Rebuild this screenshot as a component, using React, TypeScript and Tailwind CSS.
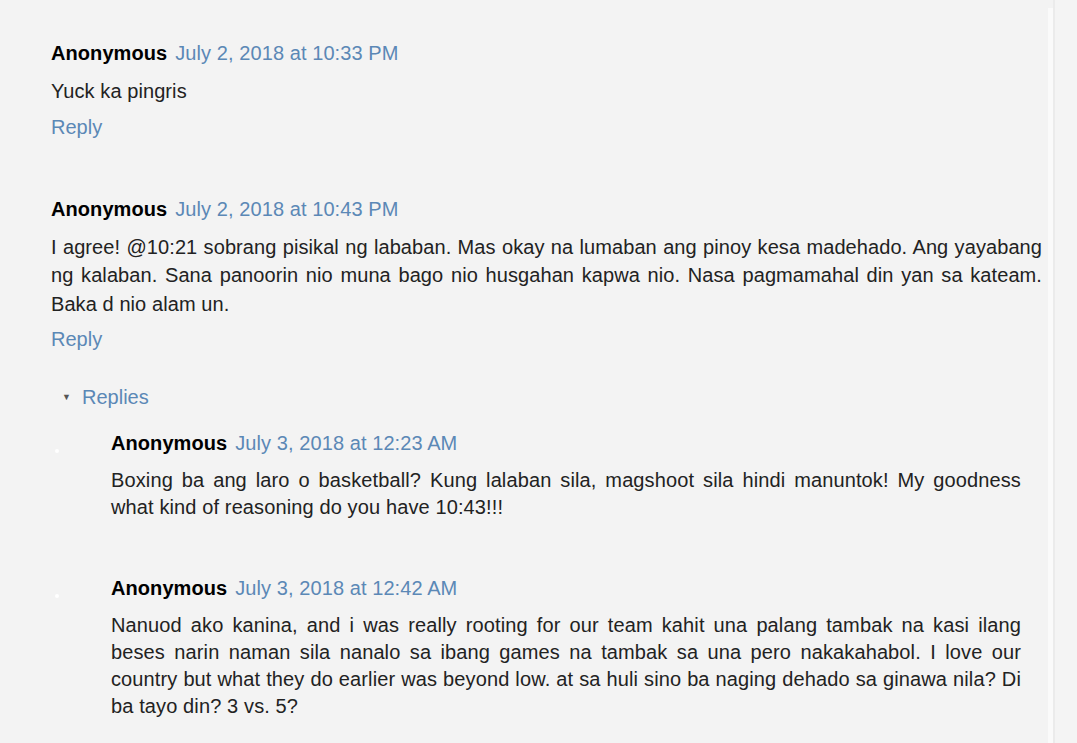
import React from 'react';

type Item = {
  date: string;
  body: string;
};

const font = { fontFamily: '"Liberation Sans", Arial, sans-serif' };

function Header({ date }: { date: string }) {
  return (
    <div className="leading-[28px] text-[20px] tracking-[0.08px]">
      <span className="font-bold text-black">Anonymous</span>
      <a className="ml-2 text-[#5b88b6]">{date}</a>
    </div>
  );
}

function Comment({ date, body }: Item) {
  return (
    <div>
      <Header date={date} />
      <p className="mt-[10px] text-[20px] leading-[28.5px] tracking-[0.08px] text-[#222] text-justify">{body}</p>
      <div className="mt-[7px] text-[20px] leading-[28px] text-[#5b88b6]">Reply</div>
    </div>
  );
}

function NestedComment({ date, body }: Item) {
  return (
    <div className="flex">
      <div className="w-[60px] shrink-0 pt-[20px] pl-[4px]">
        <div className="w-[4px] h-[4px] rounded-full bg-white" />
      </div>
      <div className="flex-1 pr-[21px]">
        <Header date={date} />
        <p className="mt-[10px] text-[20px] leading-[27.3px] tracking-[0.12px] text-[#222] text-justify">{body}</p>
      </div>
    </div>
  );
}

export default function App() {
  return (
    <div className="flex min-h-[743px] bg-[#f3f3f3]" style={font}>
      <div className="w-[1048px] shrink-0 pl-[51px] pr-[6px] pt-[39px]">
        <Comment date="July 2, 2018 at 10:33 PM" body="Yuck ka pingris" />
        <div className="mt-[54px]">
          <Comment
            date="July 2, 2018 at 10:43 PM"
            body="I agree! @10:21 sobrang pisikal ng lababan. Mas okay na lumaban ang pinoy kesa madehado. Ang yayabang ng kalaban. Sana panoorin nio muna bago nio husgahan kapwa nio. Nasa pagmamahal din yan sa kateam. Baka d nio alam un."
          />
        </div>
        <div className="mt-[30px] flex items-center leading-[28px] text-[20px]">
          <span className="ml-[11px] w-[20px] text-[9px] text-[#555]">▼</span>
          <span className="text-[#5b88b6]">Replies</span>
        </div>
        <div className="mt-[18px]">
          <NestedComment
            date="July 3, 2018 at 12:23 AM"
            body="Boxing ba ang laro o basketball? Kung lalaban sila, magshoot sila hindi manuntok! My goodness what kind of reasoning do you have 10:43!!!"
          />
          <div className="mt-[52px]">
            <NestedComment
              date="July 3, 2018 at 12:42 AM"
              body="Nanuod ako kanina, and i was really rooting for our team kahit una palang tambak na kasi ilang beses narin naman sila nanalo sa ibang games na tambak sa una pero nakakahabol. I love our country but what they do earlier was beyond low. at sa huli sino ba naging dehado sa ginawa nila? Di ba tayo din? 3 vs. 5?"
            />
          </div>
        </div>
      </div>
      <div className="mt-[8px] w-[5px] shrink-0 bg-[#fafafa]" />
      <div className="w-[2px] shrink-0 bg-[#ebebeb]" />
      <div className="flex-1 bg-[#f4f4f4]" />
    </div>
  );
}
